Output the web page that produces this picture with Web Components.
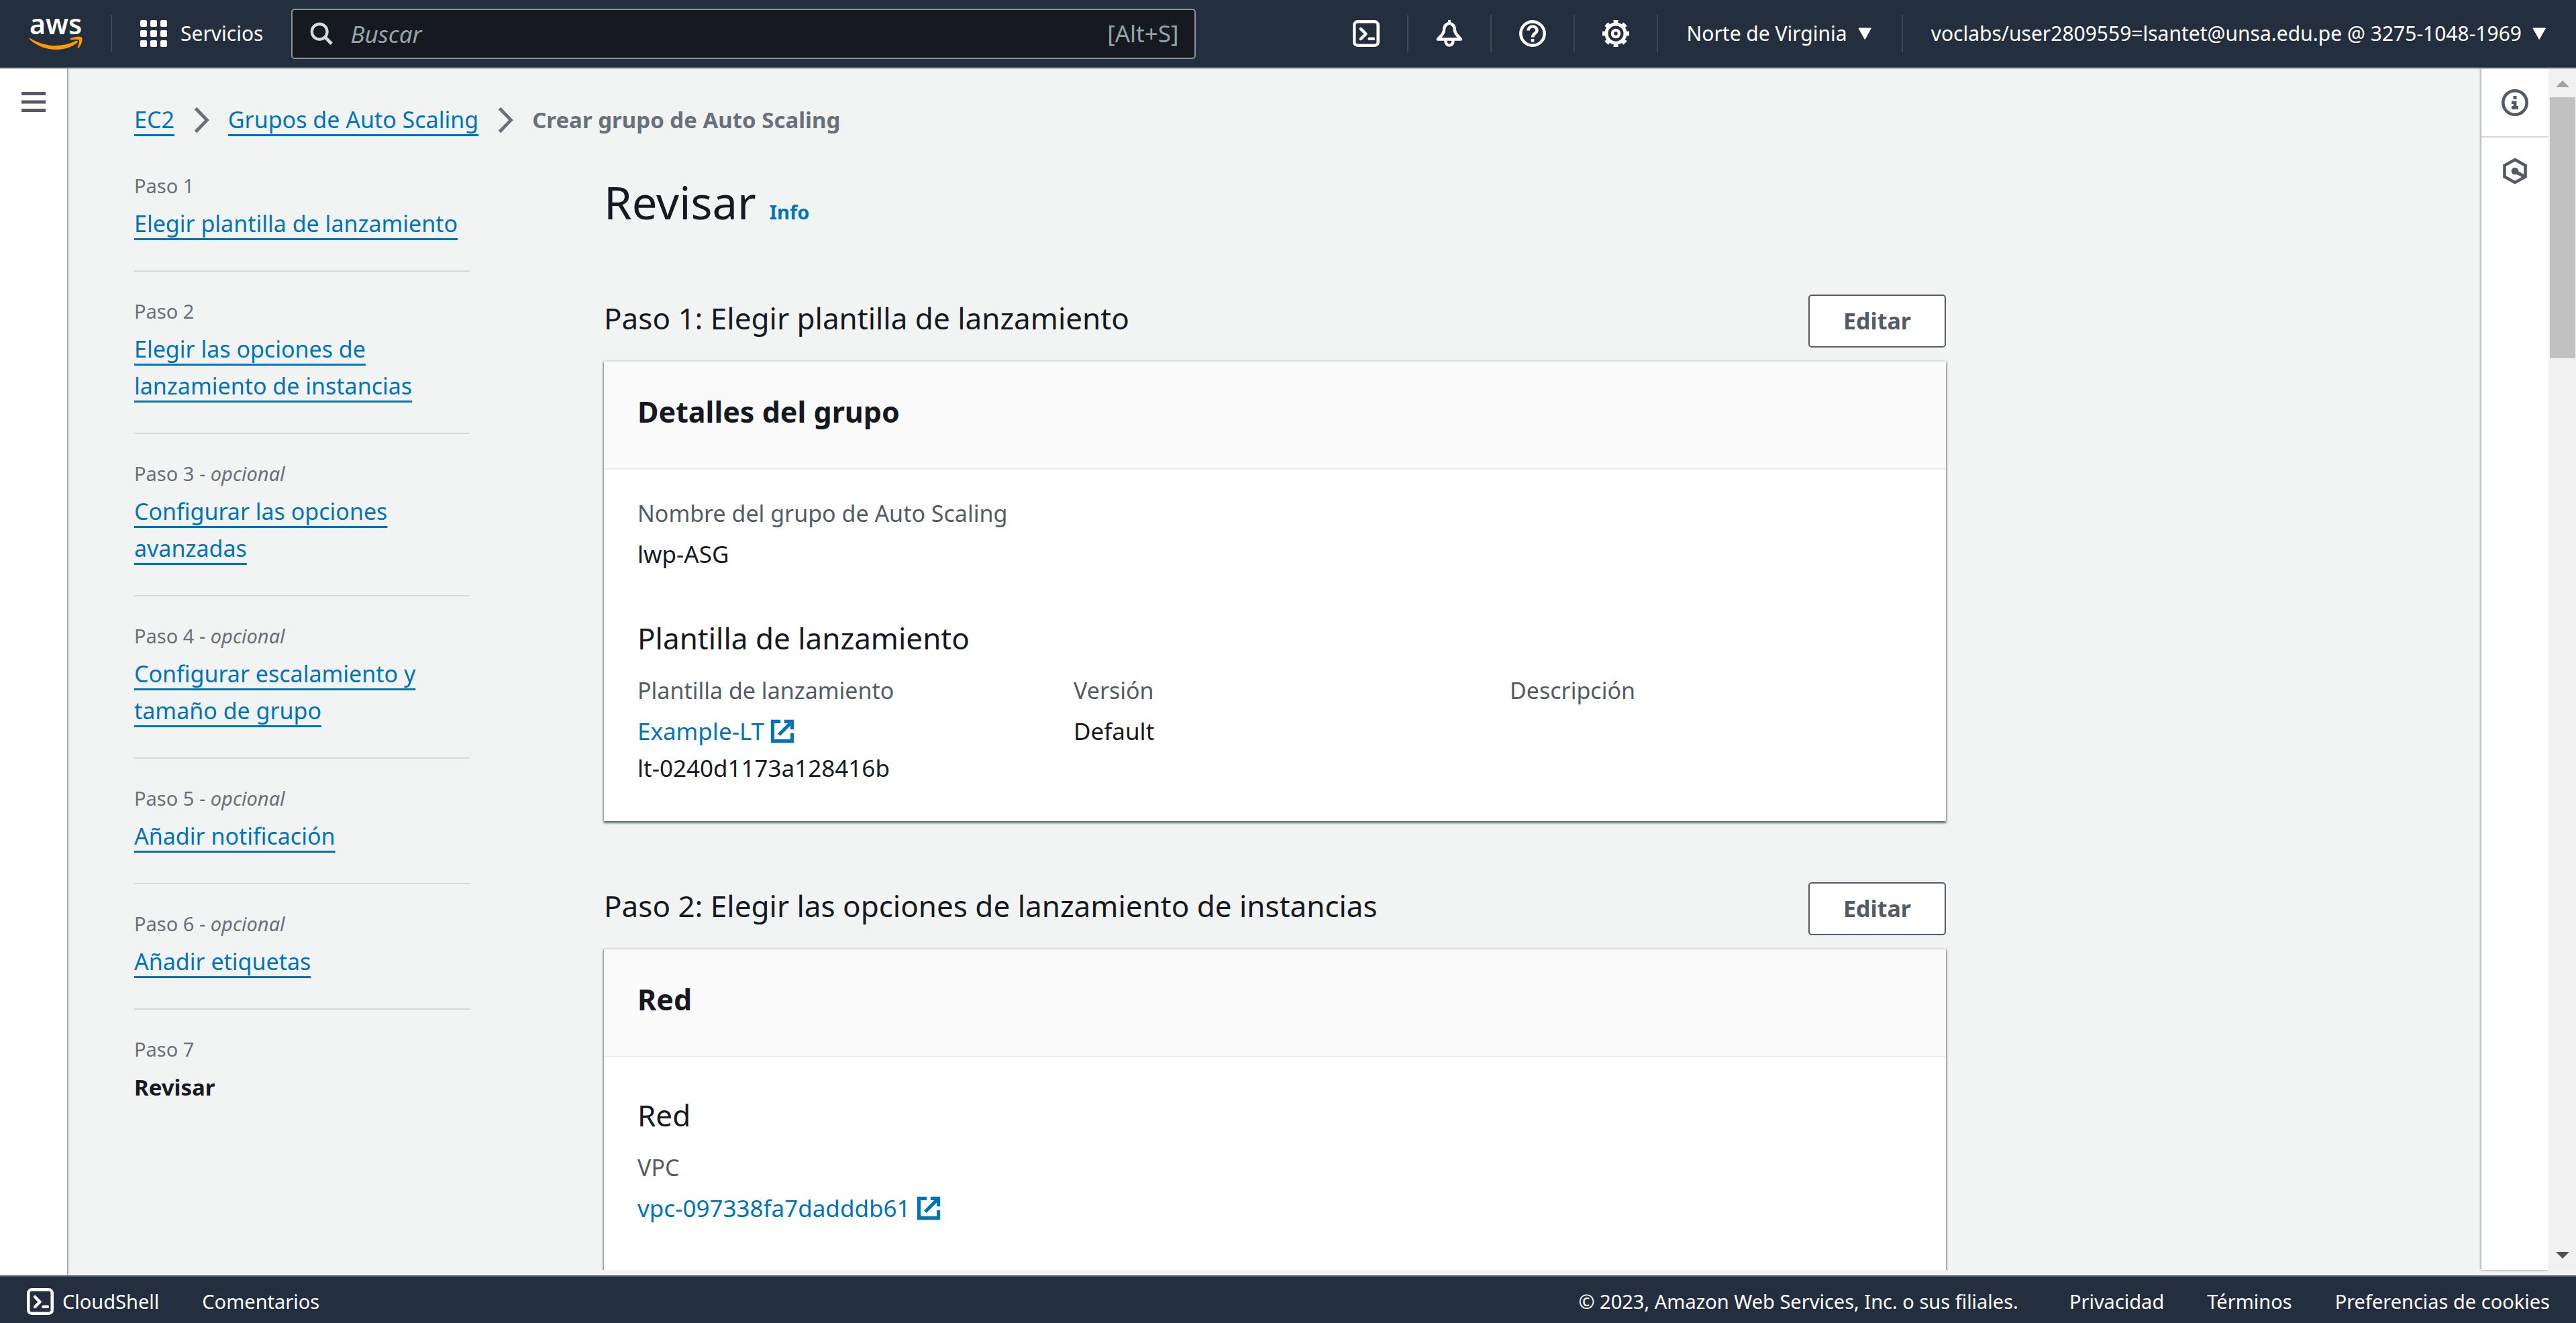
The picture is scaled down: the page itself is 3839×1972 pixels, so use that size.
<!DOCTYPE html>
<html lang="es">
<head>
<meta charset="utf-8">
<title>Crear grupo de Auto Scaling</title>
<style>
  html, body { margin: 0; height: 100%; }
  body {
    --ink: #16191f; --muted: #545b64; --soft: #687078; --link: #0073bb;
    --nav: #232f3e; --bg: #f2f3f3; --line: #d5dbdb; --hair: #eaeded;
    font-family: "Noto Sans", "Open Sans", sans-serif;
    font-size: 34px; line-height: 55px; color: var(--ink); background: var(--bg);
    overflow: hidden;
  }
</style>
</head>
<body>
<app-shell>
  <top-bar slot="top"></top-bar>
  <side-rail slot="left"></side-rail>
  <bread-crumbs slot="crumbs"></bread-crumbs>
  <wizard-steps slot="steps">
    <wizard-step number="1" href="#paso1">Elegir plantilla de lanzamiento</wizard-step>
    <wizard-step number="2" href="#paso2">Elegir las opciones de lanzamiento de instancias</wizard-step>
    <wizard-step number="3" optional href="#paso3">Configurar las opciones avanzadas</wizard-step>
    <wizard-step number="4" optional href="#paso4">Configurar escalamiento y tamaño de grupo</wizard-step>
    <wizard-step number="5" optional href="#paso5">Añadir notificación</wizard-step>
    <wizard-step number="6" optional href="#paso6">Añadir etiquetas</wizard-step>
    <wizard-step number="7" current>Revisar</wizard-step>
  </wizard-steps>
  <page-title info="Info">Revisar</page-title>
  <review-section heading="Paso 1: Elegir plantilla de lanzamiento">
    <info-card heading="Detalles del grupo">
      <field-group>
        <key-value label="Nombre del grupo de Auto Scaling">lwp-ASG</key-value>
      </field-group>
      <field-group heading="Plantilla de lanzamiento">
        <key-value label="Plantilla de lanzamiento"><external-link href="#plantilla">Example-LT</external-link>lt-0240d1173a128416b</key-value>
        <key-value label="Versión">Default</key-value>
        <key-value label="Descripción"></key-value>
      </field-group>
    </info-card>
  </review-section>
  <review-section heading="Paso 2: Elegir las opciones de lanzamiento de instancias">
    <info-card heading="Red">
      <field-group heading="Red">
        <key-value label="VPC"><external-link href="#vpc">vpc-097338fa7dadddb61</external-link></key-value>
      </field-group>
      <field-group></field-group>
    </info-card>
  </review-section>
  <tools-panel slot="right"></tools-panel>
  <scroll-track slot="scroll"></scroll-track>
  <page-footer slot="bottom"></page-footer>
</app-shell>

<script>
const ICONS = {
  grid: '<g fill="currentColor">' + [0, 15, 30].map(y => [0, 15, 30].map(x => `<rect x="${x}" y="${y}" width="10" height="10" rx="2"/>`).join('')).join('') + '</g>',
  search: '<g fill="none" stroke="currentColor" stroke-width="4.5"><circle cx="17" cy="17" r="12"/><path d="M25.500 25.500 36 36" stroke-width="5"/></g>',
  shell: '<g fill="none" stroke="currentColor" stroke-width="4.500"><rect x="2.300" y="2.300" width="35.400" height="35.400" rx="5"/><path d="M12 13l7.500 7.500L12 28M24.500 27.700h6.500" stroke-linecap="round" stroke-linejoin="round"/></g>',
  bell: '<g fill="none" stroke="currentColor" stroke-width="4.500" stroke-linejoin="round"><path d="M20 4.500C14 6 12 10.500 12 15c0 5-5 9-9 13.500h34C33 24 28 20 28 15c0-4.500-2-9-8-10.500z"/><path d="M14.500 29v2.500a5.500 6 0 0 0 11 0V29"/></g><path d="M18 0h4v6h-4z" fill="currentColor"/>',
  help: '<g fill="none" stroke="currentColor" stroke-width="4.500"><circle cx="20" cy="20" r="17.700"/><path d="M13.500 15.500c0-3.700 3-6 6.500-6s6.500 2.200 6.500 5.700c0 4.500-6.500 4.800-6.500 10.300" stroke-width="4.500"/></g><path d="M17.700 28h4.600v4.500h-4.600z" fill="currentColor"/>',
  gear: '<g fill="none" stroke="currentColor"><circle cx="20" cy="20" r="14" stroke-width="5"/><circle cx="20" cy="20" r="17.500" stroke-width="5" pathLength="160" stroke-dasharray="10 10" stroke-dashoffset="5"/><circle cx="20" cy="20" r="5" stroke-width="4.500"/></g>',
  caret: '<path d="M1 12h18.500L10.200 28.500z" fill="currentColor" stroke="currentColor" stroke-width="1" stroke-linejoin="round"/>',
  menu: '<path d="M2 5h36v5H2zM2 17.500h36v5H2zM2 30h36v5H2z" fill="currentColor"/>',
  info: '<circle cx="20" cy="20" r="17.700" fill="none" stroke="currentColor" stroke-width="4.600"/><path d="M17.500 10h5v5h-5zM15 17.500h7.500V25H25v5H15v-5h2.500v-3H15z" fill="currentColor"/>',
  hex: '<g fill="none" stroke="currentColor" stroke-width="4.600"><path d="M20 3 35.500 11.500v17L20 37 4.500 28.500v-17z"/><path d="m21 21 12 6.500" stroke-width="5"/></g><circle cx="20" cy="20" r="5.300" fill="currentColor"/>',
  chevron: '<path d="M6.500 2.500 23.500 20 6.500 37.500" fill="none" stroke="currentColor" stroke-width="4.800"/>',
  external: '<g fill="none" stroke="currentColor" stroke-width="5.500"><path d="M17 4.700H4.700v30.600h30.600V23"/><path d="M23 4.700h12.300V17M35 5 14.500 25.500"/></g>'
};

function define(name, render) {
  customElements.define(name, class extends HTMLElement {
    connectedCallback() {
      if (this.shadowRoot) return;
      this.attachShadow({ mode: 'open' }).innerHTML = render(this);
    }
  });
}

define('ui-icon', el => {
  const name = el.getAttribute('name');
  const box = { caret: '0 0 20 40', chevron: '3 0 24 40' }[name] || '0 0 40 40';
  return `<style>
    :host { display: block; flex: none; width: 40px; height: 40px; }
    :host([name=caret]) { width: 20px; }
    :host([name=chevron]) { width: 24px; }
    :host([size=small]) { width: 38px; height: 38px; }
    svg { display: block; width: 100%; height: 100%; }
  </style><svg viewBox="${box}" aria-hidden="true">${ICONS[name]}</svg>`;
});

define('app-shell', () => `<style>
    :host { display: flex; flex-direction: column; height: 100vh; }
    .body { flex: 1; min-height: 0; display: flex; }
    .view { flex: 1; min-width: 0; display: flex; margin-bottom: 8px; }
    .page { flex: 1; min-width: 0; overflow: hidden; padding: 49px 100px 0; }
    .cols { display: grid; grid-template-columns: 500px minmax(0, 2000px); gap: 200px; }
    aside { padding-top: 12px; }
    main { padding-top: 50px; }
  </style>
  <slot name="top"></slot>
  <div class="body">
    <slot name="left"></slot>
    <div class="view">
      <div class="page">
        <slot name="crumbs"></slot>
        <div class="cols"><aside><slot name="steps"></slot></aside><main><slot></slot></main></div>
      </div>
      <slot name="right"></slot>
      <slot name="scroll"></slot>
    </div>
  </div>
  <slot name="bottom"></slot>`);

define('top-bar', () => `<style>
    :host { display: flex; align-items: center; height: 100px; flex: none; background: var(--nav); color: #fff;
      border-bottom: 2px solid #545b64; font-size: 30px; line-height: 40px; }
    .logo { display: block; margin: 0 41px 0 44px; }
    .logo svg { display: block; width: 80px; height: 90px; }
    i { width: 2px; height: 56px; flex: none; background: #414750; }
    button { display: flex; align-items: center; gap: 20px; border: 0; margin: 0; padding: 0 42px; background: none; color: inherit; font: inherit; white-space: nowrap; }
    nav button { padding: 0 41px; }
    nav .menu { gap: 16px; padding: 0 45px 0 42px; }
    label { flex: 0 1 1348px; box-sizing: border-box; height: 75px; display: flex; align-items: center; gap: 24px; padding: 0 24px;
      border: 2px solid #879596; border-radius: 5px; background: #161920; color: #d5dbdb; font-size: 35px; }
    input { flex: 1; min-width: 0; border: 0; padding: 0; outline: 0; background: none; color: #fff; font: inherit; height: 55px; }
    input::placeholder { color: #95a5a6; font-style: italic; opacity: 1; }
    kbd { font: inherit; color: #95a5a6; }
    nav { margin-left: auto; display: flex; align-items: center; }
  </style>
  <a class="logo" href="#inicio" aria-label="aws"><svg viewBox="0 -20 80 90">
    <text x="39" y="26" text-anchor="middle" font-family="Noto Sans" font-weight="600" font-size="41" fill="#fff">aws</text>
    <path d="M1 32C24 46 48 46 69 36c2.500-1 4 1 2 2.800C52 54 20 52 .500 34c-1.200-1.200-.600-2.600.500-2z" fill="#ff9900"/>
    <path d="M61 32.500c6-3.500 15-3.500 17-1.500 2 3-1 12-5 15.500-1 .600-1.700.200-1.300-.800 1.200-3.500 3-9 2-10.700-1.300-1.800-7.500-1.200-11.700-.800-1.400.100-2-.900-1-1.700z" fill="#ff9900"/>
  </svg></a><i></i>
  <button type="button"><ui-icon name="grid"></ui-icon>Servicios</button>
  <label><ui-icon name="search" size="small"></ui-icon><input type="text" placeholder="Buscar" aria-label="Buscar"><kbd>[Alt+S]</kbd></label>
  <nav>
    <button type="button" aria-label="CloudShell"><ui-icon name="shell"></ui-icon></button><i></i>
    <button type="button" aria-label="Notificaciones"><ui-icon name="bell"></ui-icon></button><i></i>
    <button type="button" aria-label="Ayuda"><ui-icon name="help"></ui-icon></button><i></i>
    <button type="button" aria-label="Configuración"><ui-icon name="gear"></ui-icon></button><i></i>
    <button type="button" class="menu">Norte de Virginia<ui-icon name="caret"></ui-icon></button><i></i>
    <button type="button" class="menu">voclabs/user2809559=lsantet@unsa.edu.pe @ 3275-1048-1969<ui-icon name="caret"></ui-icon></button>
  </nav>`);

define('side-rail', () => `<style>
    :host { display: block; flex: none; width: 100px; background: #fff; color: #545b64; box-shadow: 1px 0 3px rgba(0, 28, 36, .5); }
    button { display: block; border: 0; background: none; color: inherit; padding: 30px; margin: 0; }
  </style><button type="button" aria-label="Abrir navegación"><ui-icon name="menu"></ui-icon></button>`);

define('bread-crumbs', () => `<style>
    :host { display: block; }
    nav { display: flex; align-items: center; gap: 28px; color: var(--soft); }
    a { color: var(--link); text-decoration: underline 3px; text-underline-offset: 9px; text-decoration-skip-ink: none; }
    b { font-size: 33px; }
  </style><nav aria-label="Ruta"><a href="#ec2">EC2</a><ui-icon name="chevron"></ui-icon><a href="#grupos">Grupos de Auto Scaling</a><ui-icon name="chevron"></ui-icon><b>Crear grupo de Auto Scaling</b></nav>`);

define('wizard-steps', () => `<style>:host { display: block; }</style><nav aria-label="Pasos"><slot></slot></nav>`);

define('wizard-step', el => {
  const optional = el.hasAttribute('optional') ? ' - <em>opcional</em>' : '';
  const title = el.hasAttribute('current')
    ? '<b aria-current="step"><slot></slot></b>'
    : `<a href="${el.getAttribute('href')}"><slot></slot></a>`;
  return `<style>
    :host { display: block; padding: 39px 0 42px; border-bottom: 2px solid var(--line); }
    :host([current]) { border: 0; }
    small { display: block; font-size: 29px; line-height: 40px; margin-bottom: 9px; color: var(--soft); }
    a { color: var(--link); text-decoration: underline 3px; text-underline-offset: 9px; text-decoration-skip-ink: none; }
    b { font-size: 33px; }
  </style><small>Paso ${el.getAttribute('number')}${optional}</small><div>${title}</div>`;
});

define('page-title', el => `<style>
    :host { display: flex; align-items: baseline; gap: 20px; margin-bottom: 93px; }
    h1 { margin: 0; font-size: 67px; line-height: 90px; font-weight: 400; }
    a { color: var(--link); font-size: 29px; line-height: 40px; font-weight: 700; text-decoration: none; }
  </style><h1><slot></slot></h1><a href="#info">${el.getAttribute('info')}</a>`);

define('review-section', el => `<style>
    :host { display: block; margin-bottom: 91px; }
    header { display: flex; justify-content: space-between; align-items: flex-start; margin-bottom: 20px; }
    h2 { margin: 5px 0 0; font-size: 44px; line-height: 60px; font-weight: 400; }
    button { box-sizing: border-box; height: 79px; padding: 0 50px; border: 2px solid #545b64; border-radius: 5px; background: #fff; color: #545b64; font: inherit; font-weight: 700; line-height: 55px; }
  </style><header><h2>${el.getAttribute('heading')}</h2><button type="button">Editar</button></header><slot></slot>`);

define('info-card', el => `<style>
    :host { display: block; background: #fff; border-top: 2px solid var(--hair); box-shadow: 0 3px 3px rgba(0, 28, 36, .45), 1px 1px 3px rgba(0, 28, 36, .3), -1px 1px 3px rgba(0, 28, 36, .3); }
    header { padding: 44px 50px 54px; background: #fafafa; border-bottom: 2px solid var(--hair); }
    h3 { margin: 0; font-size: 43px; line-height: 60px; font-weight: 700; }
    .body { display: flex; flex-direction: column; gap: 50px; padding: 38px 50px 52px; }
  </style><header><h3>${el.getAttribute('heading')}</h3></header><div class="body"><slot></slot></div>`);

define('field-group', el => {
  const heading = el.getAttribute('heading');
  return `<style>
    :host { display: block; }
    h4 { margin: 18px 0 21px; font-size: 44px; line-height: 60px; font-weight: 400; }
    .grid { display: grid; grid-template-columns: repeat(3, minmax(0, 1fr)); gap: 50px; }
  </style>${heading ? `<h4>${heading}</h4>` : ''}<div class="grid"><slot></slot></div>`;
});

define('key-value', el => `<style>
    :host { display: block; }
    .label { color: var(--muted); margin-bottom: 5px; white-space: nowrap; }
    .value { font-size: 35px; }
  </style><div class="label">${el.getAttribute('label')}</div><div class="value"><slot></slot></div>`);

define('external-link', el => `<style>
    :host { display: block; font-size: 35px; }
    a { display: flex; align-items: center; gap: 8px; color: var(--link); text-decoration: none; }
  </style><a href="${el.getAttribute('href')}"><slot></slot><ui-icon name="external" size="small"></ui-icon></a>`);

define('tools-panel', () => `<style>
    :host { display: block; flex: none; width: 100px; background: #fff; color: #545b64; box-shadow: -1px 0 3px rgba(0, 28, 36, .5); }
    button { display: block; box-sizing: border-box; width: 100%; height: 103px; padding: 30px; margin: 0; border: 0; border-bottom: 2px solid var(--line); background: none; color: inherit; }
    button:last-child { height: 100px; border: 0; }
  </style><button type="button" aria-label="Información"><ui-icon name="info"></ui-icon></button><button type="button" aria-label="Tutoriales"><ui-icon name="hex"></ui-icon></button>`);

define('scroll-track', () => `<style>
    :host { display: flex; flex-direction: column; flex: none; width: 41px; background: #f1f1f1; }
    svg { display: block; flex: none; width: 41px; height: 43px; }
    .thumb { flex: 228; margin: 0 1px 0 2px; background: #c1c1c1; }
    .rest { flex: 772; }
  </style>
  <svg viewBox="0 0 41 43"><path d="M11 28h20L21 18z" fill="#a3a3a3"/></svg><div class="thumb"></div><div class="rest"></div>
  <svg viewBox="0 0 41 43"><path d="M11 16h20L21 26z" fill="#505050"/></svg>`);

define('page-footer', () => `<style>
    :host { display: flex; align-items: center; gap: 64px; flex: none; box-sizing: border-box; height: 71px; padding: 5px 39px 0 40px; border-top: 2px solid #545b64; background: var(--nav); color: #fff; font-size: 29px; line-height: 40px; white-space: nowrap; }
    a, button { display: flex; align-items: center; gap: 13px; padding: 0; border: 0; background: none; color: inherit; font: inherit; text-decoration: none; }
    .copy { margin-left: auto; margin-right: 12px; }
  </style>
  <button type="button"><ui-icon name="shell"></ui-icon>CloudShell</button><a href="#comentarios">Comentarios</a>
  <span class="copy">© 2023, Amazon Web Services, Inc. o sus filiales.</span>
  <a href="#privacidad">Privacidad</a><a href="#terminos">Términos</a><a href="#cookies">Preferencias de cookies</a>`);
</script>
</body>
</html>
